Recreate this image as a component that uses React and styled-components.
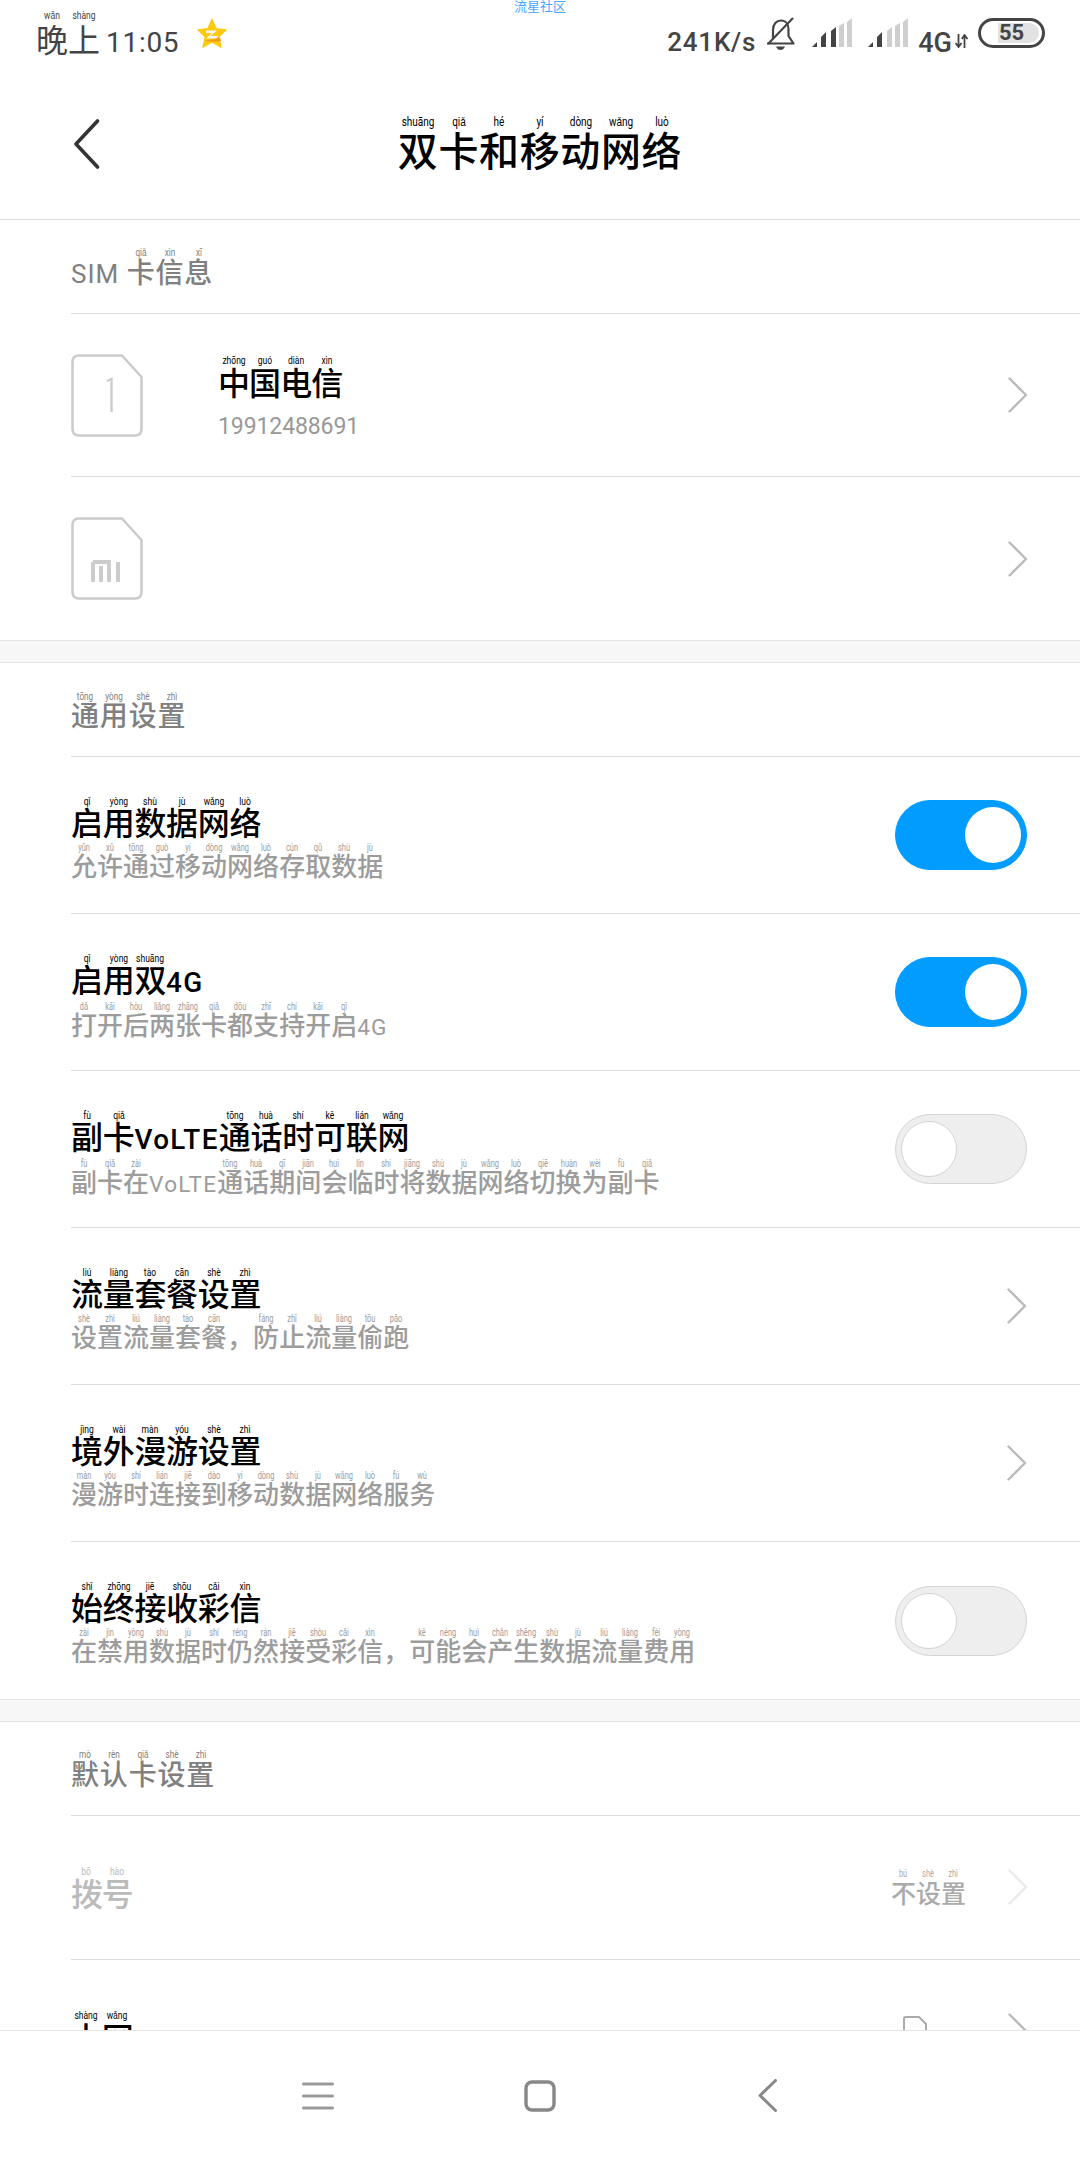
import React from "react";
import styled, { createGlobalStyle } from "styled-components";

const GlobalStyle = createGlobalStyle`
  html, body {
    margin: 0;
    padding: 0;
    background: #fff;
    font-family: Roboto, "Noto Sans CJK SC", sans-serif;
  }
`;

const Page = styled.div`
  width: 1080px;
  height: 2160px;
  display: flex;
  flex-direction: column;
  overflow: hidden;
  background: #fff;
`;

/* ---------- pinyin text ---------- */

const Char = styled.span`
  position: relative;
  display: inline-block;
  font-family: "Noto Sans CJK SC", sans-serif;
`;

const Pinyin = styled.span`
  position: absolute;
  left: 50%;
  top: ${(props) => props.$top}px;
  transform: translateX(-50%) scaleX(0.74);
  font-family: Roboto, sans-serif;
  font-size: ${(props) => props.$size}px;
  font-weight: 400;
  line-height: 1;
  white-space: nowrap;
  letter-spacing: 0;
`;

const Latin = styled.span`
  font-family: Roboto, sans-serif;
  font-size: ${(props) => props.$scale || 0.87}em;
  font-weight: ${(props) => (props.$bold ? 500 : 400)};
  letter-spacing: ${(props) => props.$track || 0}px;
`;

// 汉字逐字拆开，上面放拼音；拉丁字母不带拼音
function Ruby({ text, py, size, top, bold, track }) {
  const sounds = py.split(" ");
  let index = 0;
  const parts = text.match(/[\u4e00-\u9fff]|，|[^\u4e00-\u9fff，]+/g);
  return parts.map((part, i) => {
    if (/[\u4e00-\u9fff]/.test(part)) {
      const sound = sounds[index++];
      return (
        <Char key={i}>
          {part}
          <Pinyin $size={size} $top={top}>
            {sound}
          </Pinyin>
        </Char>
      );
    }
    if (part === "，") return <Char key={i}>{part}</Char>;
    return (
      <Latin key={i} $bold={bold} $track={track}>
        {part}
      </Latin>
    );
  });
}

/* ---------- status bar ---------- */

const StatusBar = styled.div`
  position: relative;
  height: 64px;
  display: flex;
  align-items: flex-start;
  justify-content: space-between;
  padding: 0 35px 0 36px;
  box-sizing: border-box;
  color: #444;
`;

const NoticeLabel = styled.div`
  position: absolute;
  left: 514px;
  top: -1px;
  font-family: "Noto Sans CJK SC", sans-serif;
  font-size: 13px;
  line-height: 14px;
  color: #4aa8ff;
`;

const StatusLeft = styled.div`
  display: flex;
  align-items: flex-start;
  padding-top: 18px;
`;

const Clock = styled.div`
  font-size: 32px;
  line-height: 40px;
  white-space: nowrap;
`;

const ClockTime = styled.span`
  font-family: Roboto, sans-serif;
  font-size: 28px;
  margin-left: 6px;
  letter-spacing: 0.7px;
`;

const QqStar = styled.svg`
  margin: 1px 0 0 18px;
`;

const StatusRight = styled.div`
  display: flex;
  align-items: flex-start;
  padding-top: 17px;
`;

const NetSpeed = styled.div`
  font-size: 26px;
  font-weight: 500;
  line-height: 30px;
  margin: 10px 9px 0 0;
  letter-spacing: 0.8px;
  white-space: nowrap;
`;

const StatusIcon = styled.svg`
  display: block;
  margin-left: ${(props) => props.$gap || 0}px;
  margin-top: ${(props) => props.$down || 0}px;
`;

const NetType = styled.div`
  font-size: 27px;
  font-weight: 500;
  line-height: 30px;
  margin: 11px 0 0 10px;
`;

const Battery = styled.div`
  width: 67px;
  height: 30px;
  margin: 1px 0 0 10px;
  box-sizing: border-box;
  border: 3px solid #444;
  border-radius: 15px;
  padding: 2px 3px 2px 17px;
  display: flex;
`;

const BatteryFill = styled.div`
  flex: 1;
  background: #e2e2e2;
  border-radius: 0 10px 10px 0;
  font-size: 22px;
  font-weight: 700;
  line-height: 20px;
  padding-left: 1px;
  color: #444;
`;

/* ---------- header ---------- */

const Header = styled.header`
  height: 156px;
  box-sizing: border-box;
  border-bottom: 1px solid #dcdcdc;
  display: grid;
  grid-template-columns: 1fr auto 1fr;
  align-items: start;
`;

const BackIcon = styled.svg`
  margin: 55px 0 0 74px;
  display: block;
`;

const Title = styled.h1`
  margin: 61px 0 0;
  font-size: 40px;
  font-weight: 500;
  line-height: 48px;
  letter-spacing: 0.6px;
  color: #000;
  white-space: nowrap;
`;

/* ---------- list ---------- */

const Content = styled.main`
  flex: 1;
  min-height: 0;
  overflow: hidden;
`;

const GapBand = styled.div`
  height: 23px;
  box-sizing: border-box;
  background: #f7f7f7;
  border-top: 1px solid #e4e4e4;
  border-bottom: 1px solid #e4e4e4;
`;

const SectionTitle = styled.h2`
  margin: 0 0 0 71px;
  height: 94px;
  box-sizing: border-box;
  padding-top: 31px;
  border-bottom: 1px solid #dcdcdc;
  font-size: 28px;
  font-weight: 500;
  line-height: 40px;
  letter-spacing: 0.8px;
  color: #808080;
`;

const SimRow = styled.div`
  margin-left: 71px;
  height: 163px;
  box-sizing: border-box;
  padding-right: 52px;
  display: grid;
  grid-template-columns: 147px 1fr auto;
  align-items: center;
  border-bottom: ${(props) => (props.$last ? "none" : "1px solid #dcdcdc")};
`;

const SimText = styled.div`
  align-self: start;
  padding-top: 47px;
`;

const SimName = styled.div`
  font-size: 32px;
  font-weight: 500;
  line-height: 40px;
  letter-spacing: -0.9px;
  color: #000;
`;

const SimNumber = styled.div`
  font-family: Roboto, sans-serif;
  font-size: 23px;
  line-height: 30px;
  margin-top: 8px;
  letter-spacing: -0.1px;
  color: #999;
`;

const Row = styled.div`
  margin-left: 71px;
  height: 157px;
  box-sizing: border-box;
  padding-right: 53px;
  display: grid;
  grid-template-columns: 1fr auto;
  align-items: center;
  border-bottom: ${(props) => (props.$last ? "none" : "1px solid #dcdcdc")};
`;

const RowText = styled.div`
  align-self: start;
  padding-top: 44px;
`;

const RowTitle = styled.div`
  font-size: 32px;
  font-weight: 500;
  line-height: 40px;
  letter-spacing: -0.3px;
  color: #000;
`;

const RowSub = styled.div`
  font-size: 26px;
  font-weight: 500;
  line-height: 41px;
  letter-spacing: 0;
  color: #9c9c9c;
  white-space: nowrap;
`;

const Toggle = styled.div`
  width: 132px;
  height: 70px;
  box-sizing: border-box;
  border-radius: 35px;
  display: flex;
  align-items: center;
  padding: 0 5px;
  justify-content: ${(props) => (props.$on ? "flex-end" : "flex-start")};
  background: ${(props) => (props.$on ? "#009cff" : "#eeeeee")};
  border: 1px solid ${(props) => (props.$on ? "#009cff" : "#d4d4d4")};
`;

const Knob = styled.div`
  width: 56px;
  height: 56px;
  box-sizing: border-box;
  border-radius: 50%;
  background: #fff;
  border: ${(props) => (props.$on ? "none" : "1px solid #d4d4d4")};
`;

const ChoiceRow = styled.div`
  margin-left: 71px;
  height: 144px;
  box-sizing: border-box;
  padding-right: 52px;
  display: flex;
  align-items: flex-start;
  border-bottom: 1px solid #dcdcdc;
`;

const ChoiceLabel = styled.div`
  flex: 1;
  padding-top: 56px;
  font-size: 32px;
  font-weight: 500;
  line-height: 40px;
  letter-spacing: -1.2px;
  color: ${(props) => props.$color};
`;

const ChoiceValue = styled.div`
  padding-top: 61px;
  font-size: 25px;
  font-weight: 500;
  line-height: 30px;
  color: #aaa;
  margin-right: 42px;
`;

const ChoiceChevron = styled.svg`
  display: block;
  margin-top: 53px;
`;

const SmallSim = styled.svg`
  display: block;
  margin: 56px 81px 0 0;
`;

/* ---------- nav bar ---------- */

const NavBar = styled.nav`
  flex: none;
  height: 130px;
  box-sizing: border-box;
  background: #fff;
  border-top: 1px solid #e4e4e4;
  display: flex;
  align-items: center;
  justify-content: center;
`;

const NavButton = styled.div`
  width: 227px;
  box-sizing: border-box;
  padding-left: ${(props) => props.$nudge || 0}px;
  display: flex;
  justify-content: center;
`;

/* ---------- drawings ---------- */

function Chevron({ color = "#bbb" }) {
  return (
    <svg width="20" height="36" viewBox="0 0 20 36">
      <path d="M1.5 1.5 L18 18 L1.5 34.5" fill="none" stroke={color} strokeWidth="2.4" strokeLinecap="round" strokeLinejoin="round" />
    </svg>
  );
}

function SimOutline({ children }) {
  return (
    <svg width="72" height="83" viewBox="0 0 72 83" style={{ display: "block" }}>
      <path
        d="M8 1.5 H51 L70.5 23 V75 Q70.5 81.5 64 81.5 H8 Q1.5 81.5 1.5 75 V8 Q1.5 1.5 8 1.5 Z"
        fill="none"
        stroke="#ccc"
        strokeWidth="2.6"
        strokeLinejoin="round"
      />
      {children}
    </svg>
  );
}

function Signal({ level }) {
  const bars = [
    "M0 29 L5 24 V29 Z",
    "M9 29 V19 L14 14 V29 Z",
    "M19 29 V13 L24 9 V29 Z",
    "M27 29 V8 L32 5 V29 Z",
    "M35 29 V4 L40 0 V29 Z",
  ];
  return (
    <StatusIcon width="40" height="29" viewBox="0 0 40 29" $gap={16} $down={1}>
      {bars.map((d, i) => (
        <path key={d} d={d} fill={i < level ? "#444" : "#cfcfcf"} />
      ))}
    </StatusIcon>
  );
}

const rows = [
  { title: "启用数据网络", titlePy: "qǐ yòng shù jù wǎng luò", sub: "允许通过移动网络存取数据", subPy: "yǔn xǔ tōng guò yí dòng wǎng luò cún qǔ shù jù", kind: "on" },
  { title: "启用双4G", titlePy: "qǐ yòng shuāng", sub: "打开后两张卡都支持开启4G", subPy: "dǎ kāi hòu liǎng zhāng qiǎ dōu zhī chí kāi qǐ", kind: "on" },
  { title: "副卡VoLTE通话时可联网", titlePy: "fù qiǎ tōng huà shí kě lián wǎng", sub: "副卡在VoLTE通话期间会临时将数据网络切换为副卡", subPy: "fù qiǎ zài tōng huà qī jiān huì lín shí jiāng shù jù wǎng luò qiē huàn wèi fù qiǎ", kind: "off" },
  { title: "流量套餐设置", titlePy: "liú liàng tào cān shè zhì", sub: "设置流量套餐，防止流量偷跑", subPy: "shè zhì liú liàng tào cān fáng zhǐ liú liàng tōu pǎo", kind: "link" },
  { title: "境外漫游设置", titlePy: "jìng wài màn yóu shè zhì", sub: "漫游时连接到移动数据网络服务", subPy: "màn yóu shí lián jiē dào yí dòng shù jù wǎng luò fú wù", kind: "link" },
  { title: "始终接收彩信", titlePy: "shǐ zhōng jiē shōu cǎi xìn", sub: "在禁用数据时仍然接受彩信，可能会产生数据流量费用", subPy: "zài jìn yòng shù jù shí réng rán jiē shòu cǎi xìn kě néng huì chǎn shēng shù jù liú liàng fèi yòng", kind: "off" },
];

export default function App() {
  return (
    <Page>
      <GlobalStyle />
      <StatusBar>
        <NoticeLabel>流星社区</NoticeLabel>
        <StatusLeft>
          <Clock>
            <Ruby text="晚上" py="wǎn shàng" size={11.5} top={-8} />
            <ClockTime>11:05</ClockTime>
          </Clock>
          <QqStar width="30" height="30" viewBox="0 0 30 30">
            <path d="M15 0 L19.3 9.6 L29.5 10.8 L22 18 L24.2 28.5 L15 23.2 L5.8 28.5 L8 18 L0.5 10.8 L10.7 9.6 Z" fill="#ffc90d" stroke="#ffc90d" strokeLinejoin="round" />
            <path d="M9 11.5 H20 L13.5 17 H21 L19.5 19.5 H9 L15 14 H9 Z" fill="#f4f4f4" />
            <path d="M7 21 Q15 21.5 23 18.5 L24 22 Q15 24 7 21 Z" fill="#ef9a1a" />
          </QqStar>
        </StatusLeft>
        <StatusRight>
          <NetSpeed>241K/s</NetSpeed>
          <StatusIcon width="31" height="34" viewBox="0 0 31 34">
            <path d="M8 22 V13 C8 7 11.5 3.5 16 3.5 C21 3.5 23.5 7.5 23.5 12 V19 L28.5 26.5 H2" fill="none" stroke="#444" strokeWidth="2.2" strokeLinejoin="round" />
            <path d="M28 1 L3 27" stroke="#444" strokeWidth="2.2" />
            <path d="M11 29.5 H20 Q18.5 33 15.5 33 Q12.5 33 11 29.5 Z" fill="#444" />
          </StatusIcon>
          <Signal level={3} />
          <Signal level={2} />
          <NetType>4G</NetType>
          <StatusIcon width="13" height="14" viewBox="0 0 13 14" $gap={3} $down={17}>
            <path d="M3.5 0 V12 M0.5 9 L3.5 13 L6.5 9" fill="none" stroke="#444" strokeWidth="1.8" />
            <path d="M9.5 14 V2 M6.8 5 L9.5 1 L12.5 5" fill="none" stroke="#444" strokeWidth="1.8" />
          </StatusIcon>
          <Battery>
            <BatteryFill>55</BatteryFill>
          </Battery>
        </StatusRight>
      </StatusBar>

      <Header>
        <BackIcon width="26" height="50" viewBox="0 0 26 50">
          <path d="M23.5 2 L2 25 L23.5 48" fill="none" stroke="#333" strokeWidth="3.6" strokeLinecap="round" strokeLinejoin="round" />
        </BackIcon>
        <Title>
          <Ruby text="双卡和移动网络" py="shuāng qiǎ hé yí dòng wǎng luò" size={13.5} top={-10} />
        </Title>
      </Header>

      <Content>
        <SectionTitle>
          <Latin $scale={0.93} $track={1}>SIM </Latin>
          <Ruby text="卡信息" py="qiǎ xìn xī" size={11} top={-4} />
        </SectionTitle>
        <SimRow>
          <SimOutline>
            <path d="M36 27 L40.5 25 V58" fill="none" stroke="#ccc" strokeWidth="2.4" />
          </SimOutline>
          <SimText>
            <SimName>
              <Ruby text="中国电信" py="zhōng guó diàn xìn" size={11.5} top={-6} />
            </SimName>
            <SimNumber>19912488691</SimNumber>
          </SimText>
          <Chevron />
        </SimRow>
        <SimRow $last>
          <SimOutline>
            <path d="M22 45 H38 V65 M30 49 V65 M22 45 V65 M47 45 V65" fill="none" stroke="#ccc" strokeWidth="4" />
          </SimOutline>
          <span />
          <Chevron />
        </SimRow>
        <GapBand />

        <SectionTitle>
          <Ruby text="通用设置" py="tōng yòng shè zhì" size={11} top={-3} />
        </SectionTitle>
        {rows.map((row, i) => (
          <Row key={row.title} $last={i === rows.length - 1}>
            <RowText>
              <RowTitle>
                <Ruby text={row.title} py={row.titlePy} size={11.5} top={-5} bold track={1.4} />
              </RowTitle>
              <RowSub>
                <Ruby text={row.sub} py={row.subPy} size={10} top={-1} track={1.2} />
              </RowSub>
            </RowText>
            {row.kind === "link" ? (
              <Chevron />
            ) : (
              <Toggle $on={row.kind === "on"}>
                <Knob $on={row.kind === "on"} />
              </Toggle>
            )}
          </Row>
        ))}
        <GapBand />

        <SectionTitle>
          <Ruby text="默认卡设置" py="mò rèn qiǎ shè zhì" size={11} top={-4} />
        </SectionTitle>
        <ChoiceRow>
          <ChoiceLabel $color="#bbb">
            <Ruby text="拨号" py="bō hào" size={11.5} top={-6} />
          </ChoiceLabel>
          <ChoiceValue>
            <Ruby text="不设置" py="bú shè zhì" size={10} top={-8} />
          </ChoiceValue>
          <ChoiceChevron width="20" height="36" viewBox="0 0 20 36">
            <path d="M1.5 1.5 L18 18 L1.5 34.5" fill="none" stroke="#eaeaea" strokeWidth="2.4" strokeLinecap="round" strokeLinejoin="round" />
          </ChoiceChevron>
        </ChoiceRow>
        <ChoiceRow>
          <ChoiceLabel $color="#000">
            <Ruby text="上网" py="shàng wǎng" size={11.5} top={-6} />
          </ChoiceLabel>
          <SmallSim width="24" height="30" viewBox="0 0 24 30">
            <path d="M3 1 H16 L23 8 V27 Q23 29 21 29 H3 Q1 29 1 27 V3 Q1 1 3 1 Z" fill="none" stroke="#aaa" strokeWidth="2" />
          </SmallSim>
          <ChoiceChevron width="20" height="36" viewBox="0 0 20 36">
            <path d="M1.5 1.5 L18 18 L1.5 34.5" fill="none" stroke="#bbb" strokeWidth="2.4" strokeLinecap="round" strokeLinejoin="round" />
          </ChoiceChevron>
        </ChoiceRow>
      </Content>

      <NavBar>
        <NavButton $nudge={9}>
          <svg width="32" height="28" viewBox="0 0 32 28">
            <path d="M1.5 2 H30.5 M1.5 14 H30.5 M1.5 26 H30.5" stroke="#999" strokeWidth="3" strokeLinecap="round" />
          </svg>
        </NavButton>
        <NavButton>
          <svg width="32" height="32" viewBox="0 0 32 32">
            <rect x="2" y="2" width="28" height="28" rx="6" fill="none" stroke="#888" strokeWidth="3.4" />
          </svg>
        </NavButton>
        <NavButton>
          <svg width="19" height="33" viewBox="0 0 19 33">
            <path d="M17.5 1.5 L2 16.5 L17.5 31.5" fill="none" stroke="#888" strokeWidth="3" strokeLinecap="round" strokeLinejoin="round" />
          </svg>
        </NavButton>
      </NavBar>
    </Page>
  );
}
